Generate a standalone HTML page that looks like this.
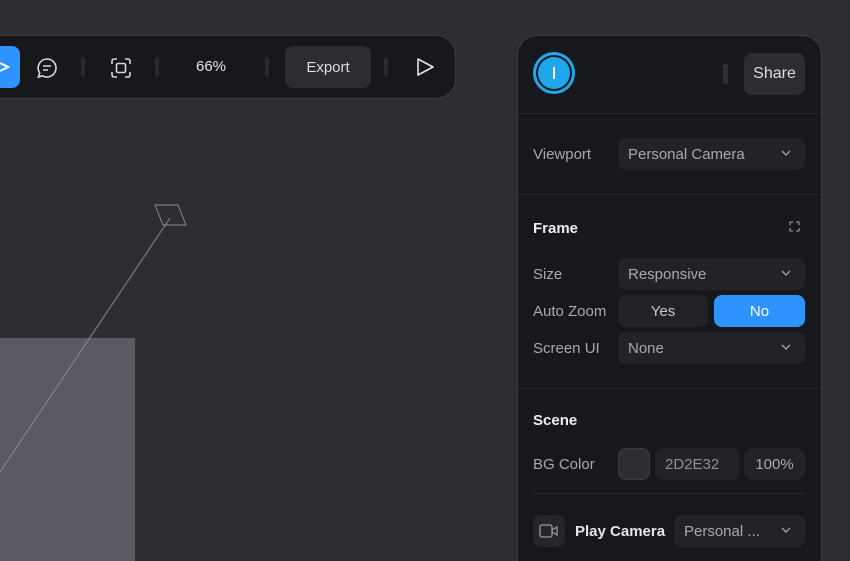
<!DOCTYPE html>
<html style="width:850px;height:561px;overflow:hidden"><head><style>
*{margin:0;padding:0;box-sizing:border-box}
body{width:850px;height:561px;background:#2d2e32;position:relative;overflow:hidden;font-family:"Liberation Sans",sans-serif;color:#d0d1d6}
.abs{position:absolute}
.tb{left:-30px;top:35px;width:486px;height:64px;background:#17181c;border:1px solid #3b3c42;border-radius:20px}
.panel{left:517px;top:35px;width:305px;height:526px;background:#17181c;border:1px solid #3b3c42;border-bottom:none;border-radius:20px 20px 0 0}
.sep{width:4px;height:20px;background:#2a2b30;border-radius:2px}
.btn{background:#2c2d32;border-radius:8px;color:#dcdde2;font-size:15px;display:flex;align-items:center;justify-content:center}
.hr{height:1px;background:#26272c}
.lbl{font-size:15px;color:#a8a9b0}
.dd{background:#222328;border-radius:8px;height:32px;font-size:15px;color:#a8a9b0;display:flex;align-items:center;padding-left:10px}
.dd svg{position:absolute;right:14px;top:12px}
.h{font-size:15px;font-weight:bold;color:#eceef2}
</style></head><body>
<div class="abs" style="left:0;top:338px;width:135px;height:223px;background:#5a5a62"></div>
<svg class="abs" style="left:0;top:0" width="300" height="561"><polygon points="155,205 178,205 186,225 163,225" fill="none" stroke="#8a8a92" stroke-width="1"/><line x1="170" y1="218" x2="0" y2="472" stroke="#8a8a92" stroke-width="1"/></svg>

<div class="abs tb"></div>
<div class="abs" style="left:-10px;top:46px;width:30px;height:42px;background:#2f93ff;border-radius:8px"></div>
<svg class="abs" style="left:0;top:60px" width="10" height="14"><path d="M0 3 L8 7 L0 11" fill="none" stroke="#fff" stroke-width="2"/></svg>
<svg class="abs" style="left:35px;top:56px" width="24" height="24" viewBox="0 0 24 24" fill="none" stroke="#d8d9de" stroke-width="1.6"><path d="M12 3a9 9 0 1 1-4.5 16.8L3.5 21l1.2-4A9 9 0 0 1 12 3z"/><path d="M8 10h8M8 14h5"/></svg>
<div class="abs sep" style="left:81px;top:57px"></div>
<svg class="abs" style="left:109px;top:56px" width="24" height="24" viewBox="0 0 24 24" fill="none" stroke="#d8d9de" stroke-width="1.6"><path d="M3 8V5a2 2 0 0 1 2-2h3M16 3h3a2 2 0 0 1 2 2v3M21 16v3a2 2 0 0 1-2 2h-3M8 21H5a2 2 0 0 1-2-2v-3"/><rect x="7.5" y="7.5" width="9" height="9" rx="1.5"/></svg>
<div class="abs sep" style="left:155px;top:57px"></div>
<div class="abs" style="left:196px;top:58px;font-size:15px;color:#e4e5ea">66%</div>
<div class="abs sep" style="left:265px;top:57px"></div>
<div class="abs btn" style="left:285px;top:46px;width:86px;height:42px">Export</div>
<div class="abs sep" style="left:384px;top:57px"></div>
<svg class="abs" style="left:414px;top:56px" width="22" height="22" viewBox="0 0 22 22"><path d="M4 3 L19 11 L4 19 Z" fill="none" stroke="#e4e5ea" stroke-width="1.6" stroke-linejoin="round"/></svg>

<div class="abs panel"></div>
<div class="abs" style="left:533px;top:52px;width:42px;height:42px;border-radius:50%;border:3px solid #1ea7ec;padding:2px"><div style="width:100%;height:100%;border-radius:50%;background:#1ea7ec;display:flex;align-items:center;justify-content:center"><div style="width:2px;height:12px;background:#fff"></div></div></div>
<div class="abs" style="left:723px;top:64px;width:5px;height:20px;background:#2e2f34;border-radius:2px"></div>
<div class="abs btn" style="left:744px;top:53px;width:61px;height:42px;font-size:16px">Share</div>
<div class="abs hr" style="left:518px;top:113px;width:303px"></div>
<div class="abs lbl" style="left:533px;top:146px">Viewport</div>
<div class="abs dd" style="left:618px;top:138px;width:187px">Personal Camera<svg width="10" height="7"><path d="M1 1l4 4 4-4" fill="none" stroke="#a0a1a8" stroke-width="1.4"/></svg></div>
<div class="abs hr" style="left:518px;top:194px;width:303px"></div>
<div class="abs h" style="left:533px;top:220px">Frame</div>
<svg class="abs" style="left:789px;top:221px" width="11" height="11" fill="none" stroke="#8a8b92" stroke-width="1.3"><path d="M1 4V1h3M7 1h3v3M10 7v3H7M4 10H1V7"/></svg>
<div class="abs lbl" style="left:533px;top:266px">Size</div>
<div class="abs dd" style="left:618px;top:258px;width:187px">Responsive<svg width="10" height="7"><path d="M1 1l4 4 4-4" fill="none" stroke="#a0a1a8" stroke-width="1.4"/></svg></div>
<div class="abs lbl" style="left:533px;top:303px">Auto Zoom</div>
<div class="abs dd" style="left:618px;top:295px;width:90px;justify-content:center;padding:0;color:#c8c9ce">Yes</div>
<div class="abs dd" style="left:714px;top:295px;width:91px;justify-content:center;padding:0;background:#2f93ff;color:#fff">No</div>
<div class="abs lbl" style="left:533px;top:340px">Screen UI</div>
<div class="abs dd" style="left:618px;top:332px;width:187px">None<svg width="10" height="7"><path d="M1 1l4 4 4-4" fill="none" stroke="#a0a1a8" stroke-width="1.4"/></svg></div>
<div class="abs hr" style="left:518px;top:388px;width:303px"></div>
<div class="abs h" style="left:533px;top:412px">Scene</div>
<div class="abs lbl" style="left:533px;top:456px">BG Color</div>
<div class="abs" style="left:618px;top:448px;width:32px;height:32px;border-radius:8px;background:#2d2e32;border:1px solid #3a3b40"></div>
<div class="abs dd" style="left:655px;top:448px;width:84px;color:#8e8f96">2D2E32</div>
<div class="abs dd" style="left:744px;top:448px;width:61px;justify-content:center;padding:0">100%</div>
<div class="abs hr" style="left:533px;top:493px;width:272px;background:#2a2b30"></div>
<div class="abs" style="left:533px;top:515px;width:32px;height:32px;border-radius:8px;background:#25262b"></div>
<svg class="abs" style="left:539px;top:524px" width="20" height="14" fill="none" stroke="#9a9ba2" stroke-width="1.3"><rect x="1" y="1" width="12" height="12" rx="2"/><path d="M13 6l5-3v8l-5-3"/></svg>
<div class="abs h" style="left:575px;top:523px;color:#e4e5ea">Play Camera</div>
<div class="abs dd" style="left:674px;top:515px;width:131px">Personal ...<svg width="10" height="7"><path d="M1 1l4 4 4-4" fill="none" stroke="#a0a1a8" stroke-width="1.4"/></svg></div>
</body></html>
